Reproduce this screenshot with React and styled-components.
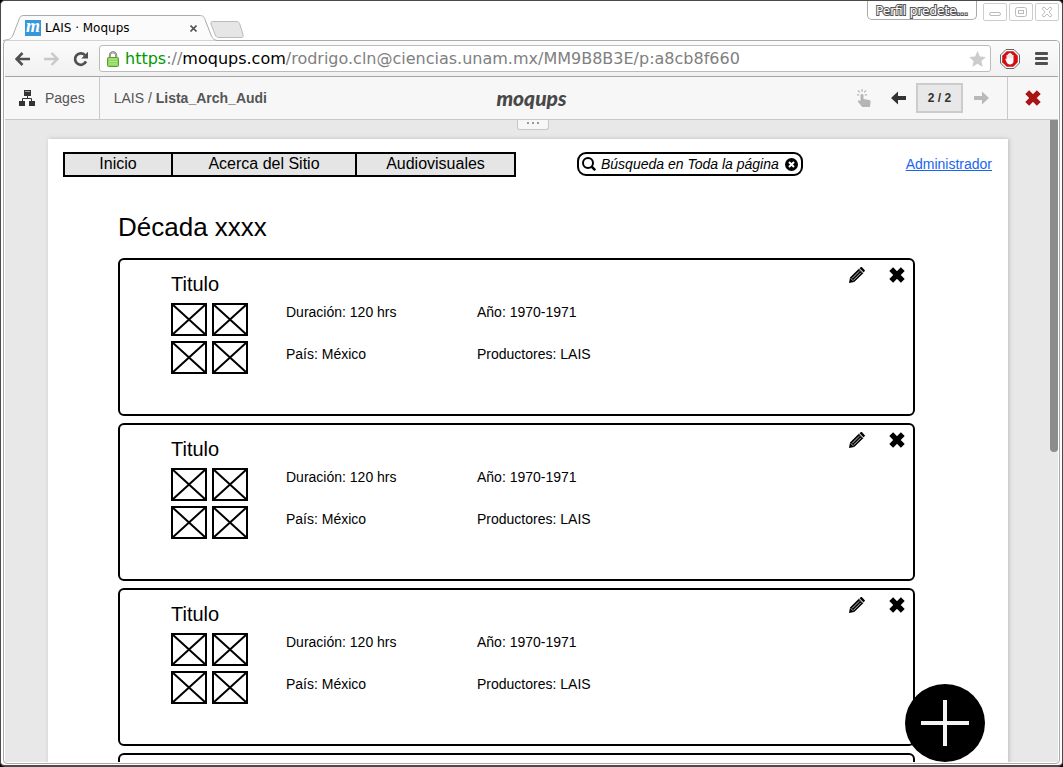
import React from 'react';
import styled, { createGlobalStyle } from 'styled-components';

const sans = '"Liberation Sans", Arial, sans-serif';
const system = '"DejaVu Sans", Verdana, sans-serif';

const Global = createGlobalStyle`
  *, *::before, *::after { box-sizing: border-box; }
  body { margin: 0; background: #000; font-family: ${sans}; color: #000; }
  button, input { font: inherit; color: inherit; margin: 0; }
  button { padding: 0; border: 0; background: none; cursor: pointer; }
  h1, h2, p, ul { margin: 0; padding: 0; font-weight: normal; }
  svg { display: block; flex: none; }
`;

/* ---------- browser window ---------- */

const Window = styled.div`
  display: flex;
  flex-direction: column;
  height: 100vh;
  padding: 0 2px 1px;
  background: #fff;
  border: 1px solid #4b4a4a;
  border-bottom-width: 2px;
  border-radius: 5px;
  overflow: hidden;
`;

const TitleBar = styled.header`
  display: flex;
  justify-content: space-between;
  height: 39px;
  flex: none;
`;

const TabStrip = styled.div`
  display: flex;
  align-items: flex-end;
`;

const Tab = styled.div`
  position: relative;
  z-index: 1;
  display: flex;
  align-items: center;
  width: 212px;
  height: 24px;
  padding: 0 18px 0 22px;
  font: 12px/16px ${system};
`;

const TabShape = styled.svg`
  position: absolute;
  left: 0;
  bottom: -1px;
  z-index: -1;
`;

const Favicon = styled.span`
  width: 16px;
  height: 16px;
  margin-right: 4px;
  background: #3498db;
  color: #fff;
  font: italic bold 18px/12px "Liberation Serif", serif;
  text-align: center;
`;

const TabTitle = styled.span`
  flex: 1;
  white-space: nowrap;
`;

const NewTab = styled.button`
  margin: 0 0 2px -5px;
`;

const WindowControls = styled.div`
  display: flex;
  align-items: flex-start;
  gap: 2px;
  padding-right: 1px;
`;

const Profile = styled.button`
  width: 110px;
  height: 19px;
  margin-right: 4px;
  border: 1px solid #aaa;
  border-top: 0;
  border-radius: 0 0 5px 5px;
  font: 12px/20px ${system};
  color: #fff;
  -webkit-text-stroke: 2px #555;
  paint-order: stroke fill;
`;

const WindowButton = styled.button`
  display: grid;
  place-items: center;
  width: 24px;
  height: 18px;
  margin-top: 2px;
  border: 1px solid #ccc;
  border-radius: 2px;
`;

const Frame = styled.div`
  display: flex;
  flex-direction: column;
  flex: 1;
  min-height: 0;
  padding: 0 1px 1px;
  border: 1px solid #aaa;
  border-radius: 4px;
  overflow: hidden;
`;

const BrowserBar = styled.div`
  display: flex;
  align-items: center;
  height: 36px;
  flex: none;
  padding: 0 10px 0 10px;
  background: linear-gradient(#fbfbfb, #f1f1f1);
  border-bottom: 1px solid #a5a5a5;
`;

const BrowserButton = styled.button`
  margin-right: ${(p) => p.$gap}px;
`;

const AddressBar = styled.div`
  display: flex;
  align-items: center;
  flex: 1;
  min-width: 0;
  height: 27px;
  padding: 0 4px 0 7px;
  margin-right: 9px;
  background: #fff;
  border: 1px solid #bbb;
  border-radius: 3px;
`;

const Address = styled.div`
  flex: 1;
  min-width: 0;
  padding-left: 6px;
  overflow: hidden;
  white-space: nowrap;
  font: 16px/22px ${system};
  color: #808080;
  outline: 0;
`;

const Secure = styled.span`
  color: #090;
`;

const Domain = styled.span`
  color: #000;
`;

/* ---------- application bar ---------- */

const AppBar = styled.div`
  display: grid;
  grid-template-columns: 1fr auto 1fr;
  height: 43px;
  flex: none;
  background: #f7f7f7;
  border-bottom: 1px solid #c8c8c8;
  color: #555;
  font-size: 14px;
`;

const BarSide = styled.div`
  display: flex;
  align-items: center;
  justify-content: ${(p) => (p.$end ? 'flex-end' : 'flex-start')};
  min-width: 0;
  white-space: nowrap;
`;

const PagesButton = styled.button`
  display: flex;
  align-items: center;
  gap: 10px;
  height: 100%;
  padding: 0 14px;
  border-right: 1px solid #c8c8c8;
`;

const Breadcrumb = styled.span`
  padding-left: 14px;
`;

const Logo = styled.span`
  align-self: center;
  color: #484848;
  font: italic 900 21px/24px Lato, sans-serif;
`;

const IconButton = styled.button`
  display: grid;
  place-items: center;
  width: 16px;
  height: 20px;
`;

const Tools = styled.div`
  display: flex;
  align-items: center;
  gap: 10px;
  padding-right: 18px;
`;

const Hotspots = styled(IconButton)`
  margin-right: 8px;
`;

const Counter = styled.span`
  width: 47px;
  height: 30px;
  border: 2px solid #ccc;
  background: #e8e8e8;
  color: #333;
  font: bold 12px/26px ${sans};
  text-align: center;
`;

const ClosePreview = styled.button`
  display: grid;
  place-items: center;
  width: 51px;
  height: 100%;
  border-left: 1px solid #c8c8c8;
`;

/* ---------- canvas ---------- */

const Canvas = styled.main`
  position: relative;
  display: flex;
  flex: 1;
  min-height: 0;
  background: #e8e8e8;
  overflow: hidden;
`;

const Handle = styled.button`
  position: absolute;
  top: -1px;
  left: 50%;
  width: 32px;
  height: 11px;
  margin-left: -15px;
  padding-bottom: 2px;
  background: #f7f7f7;
  border: 1px solid #c8c8c8;
  border-top: 0;
  border-radius: 0 0 3px 3px;
  display: grid;
  place-items: center;
`;

const Page = styled.div`
  flex: 1;
  min-width: 0;
  height: max-content;
  margin: 19px 42px 0 43px;
  padding: 13px 16px 0 15px;
  background: #fff;
  box-shadow: 1px 0 4px #bbb;
`;

const Scrollbar = styled.div`
  width: 8px;
  height: 332px;
  flex: none;
  background: #8c8c8c;
  border-radius: 0 0 4px 4px;
`;

const SiteHeader = styled.div`
  display: flex;
  align-items: flex-start;
  font-size: 14px;
`;

const Nav = styled.nav`
  display: flex;
  border: 2px solid #000;
  background: #e5e5e5;
`;

const NavLink = styled.a`
  min-width: ${(p) => p.$width}px;
  font-size: 16px;
  line-height: 20px;
  padding-bottom: 1px;
  text-align: center;
  color: #000;
  text-decoration: none;
  & + & { border-left: 2px solid #000; }
`;

const Search = styled.label`
  display: flex;
  align-items: center;
  width: 226px;
  height: 24px;
  margin-left: 61px;
  padding: 0 3px;
  border: 2px solid #000;
  border-radius: 9px;
`;

const SearchInput = styled.input`
  flex: 1;
  min-width: 0;
  height: 20px;
  padding: 0 0 0 5px;
  border: 0;
  outline: 0;
  background: none;
  font-style: italic;
  font-size: 14px;
`;

const AdminLink = styled.a`
  margin-left: auto;
  line-height: 24px;
  color: #1a66ee;
`;

const Content = styled.section`
  padding: 35px 77px 0 55px;
`;

const Heading = styled.h1`
  font-size: 26px;
  line-height: 30px;
  margin-bottom: 16px;
`;

const CardList = styled.div`
  display: flex;
  flex-direction: column;
  gap: 7px;
`;

const Card = styled.article`
  display: flex;
  justify-content: space-between;
  height: 158px;
  padding: 7px 8px 0 51px;
  border: 2px solid #000;
  border-radius: 6px;
`;

const CardTitle = styled.h2`
  margin: 5px 0 7px;
  font-size: 20px;
  line-height: 24px;
`;

const CardBody = styled.div`
  display: flex;
  gap: 38px;
`;

const Thumbs = styled.div`
  display: grid;
  grid-template-columns: 36px 36px;
  gap: 5px;
`;

const Facts = styled.div`
  display: grid;
  grid-template-columns: 191px auto;
  align-content: start;
  row-gap: 24px;
  font-size: 14px;
  line-height: 18px;
`;

const CardActions = styled.div`
  display: flex;
  align-items: flex-start;
  gap: 24px;
`;

const AddButton = styled.button`
  position: absolute;
  right: 73px;
  bottom: 0;
`;

/* ---------- icons ---------- */

const BackArrow = ({ color }) => (
  <svg width="16" height="16" viewBox="0 0 16 16" fill="none" stroke={color} strokeWidth="2.6">
    <path d="M7.500 2 1.500 8l6 6M1.500 8H15" />
  </svg>
);

const ForwardArrow = ({ color }) => (
  <svg width="16" height="16" viewBox="0 0 16 16" fill="none" stroke={color} strokeWidth="2.4">
    <path d="M7.500 2l6 6-6 6M13.500 8H0" />
  </svg>
);

const Reload = () => (
  <svg width="16" height="16" viewBox="0 0 16 16">
    <path d="M12 4.200A5.700 5.700 0 1 0 13 10.400" fill="none" stroke="#505050" strokeWidth="2.7" />
    <path d="M15 .8v6.700H8.300z" fill="#505050" />
  </svg>
);

const Lock = () => (
  <svg width="12" height="16" viewBox="0 0 12 16">
    <path d="M2.8 8V4.500a3.200 3.200 0 0 1 6.400 0V8" fill="none" stroke="#777" strokeWidth="2" />
    <path d="M2.8 8V4.500a3.200 3.200 0 0 1 6.400 0V8" fill="none" stroke="#ccc" strokeWidth=".7" />
    <rect x=".5" y="6.500" width="11" height="9" rx="1" fill="#8fd65c" stroke="#5b9b39" />
    <path d="M2 8h8M2 10.500h8M2 13h8" stroke="#b3ea87" />
  </svg>
);

const Star = () => (
  <svg width="17" height="16" viewBox="0 0 17 16">
    <path d="M8.500 0l2.400 5.500 6 .500-4.500 4 1.300 6-5.200-3.200L3.300 16l1.300-6L.1 6l6-.500z" fill="#ccc" />
  </svg>
);

const BlockIcon = () => (
  <svg width="20" height="20" viewBox="0 0 20 20">
    <path d="M6 .5h8L19.500 6v8L14 19.500H6L.5 14V6z" fill="#fff" stroke="#666" />
    <path d="M6.700 2.200h6.600l4.500 4.500v6.600l-4.500 4.500H6.700l-4.500-4.500V6.700z" fill="#d40d12" />
    <path d="M5 9.500l1.500.8V6h1.300V4.800h1.400V4h1.600v.8h1.400V6h1.300v6c0 2-1.500 3.500-3.500 3.500-1.800 0-3-1.200-3.700-3z" fill="#fff" />
    <path d="M8 6v3M10 5.500V9M12 6v3" stroke="#e88" strokeWidth=".5" />
  </svg>
);

const Menu = () => (
  <svg width="13" height="13" viewBox="0 0 13 13" fill="#505050">
    <rect width="13" height="3" rx="1" />
    <rect y="5" width="13" height="3" rx="1" />
    <rect y="10" width="13" height="3" rx="1" />
  </svg>
);

const Sitemap = () => (
  <svg width="16" height="16" viewBox="0 0 16 16" fill="#333">
    <path d="M5 0h7v6H5zM0 11h6v5H0zM10 11h6v5h-6z" />
    <path d="M8.500 5v3.500M3.500 11V8.500h9V11" fill="none" stroke="#333" />
    <path d="M6 1.500h5" stroke="#999" />
  </svg>
);

const Tap = () => (
  <svg width="14" height="18" viewBox="0 0 14 18">
    <path d="M5 5c1 0 1.500.6 1.500 1.500V10l5.500 1c1.300.3 1.700 1 1.600 2.300L13 18H5.200L1 12.700c-.5-1 .5-2 1.500-1.300l1 .800V6.500C3.500 5.600 4 5 5 5z" fill="#b5b5b5" />
    <path d="M5 0v3M1 1.300l1.800 2M9 1.300l-1.800 2M0 5.800h2.300M7.700 5.800H10" stroke="#b5b5b5" strokeWidth="1.200" />
  </svg>
);

const SolidArrow = ({ color, right }) => (
  <svg width="15" height="14" viewBox="0 0 15 14">
    <path d={right ? 'M15 7L8 .500V5H0v4h8v4.500z' : 'M0 7l7-6.500V5h8v4H7v4.500z'} fill={color} />
  </svg>
);

const Cross = ({ color = '#000' }) => (
  <svg width="16" height="16" viewBox="0 0 16 16">
    <path d="M2.200 2.200l11.600 11.600M13.800 2.200L2.200 13.800" stroke={color} strokeWidth="5.400" />
  </svg>
);

const Pencil = () => (
  <svg width="16" height="16" viewBox="0 0 16 16">
    <path d="M0 16l1-5.500L10 1.500l4.500 4.500L5.200 15zM10.600 1.200L11.600.300c.5-.4.9-.4 1.400 0l2.600 2.600c.5.500.5.900 0 1.400l-1 1z" />
    <path d="M3.200 11.300l7-7M4.800 12.900l7-7" stroke="#fff" strokeWidth=".8" />
    <path d="M1.700 11.300l3 3" stroke="#fff" strokeWidth=".7" />
    <path d="M10 2.300l3.800 3.800" stroke="#fff" strokeWidth=".6" />
  </svg>
);

const Magnifier = () => (
  <svg width="14" height="14" viewBox="0 0 14 14" fill="none" stroke="#000" strokeWidth="2">
    <circle cx="6" cy="6" r="5" />
    <path d="M9.600 9.600l3.600 3.600" strokeWidth="2.500" />
  </svg>
);

const ClearIcon = () => (
  <svg width="13" height="13" viewBox="0 0 13 13">
    <circle cx="6.500" cy="6.500" r="6.500" />
    <path d="M4 4l5 5M9 4L4 9" stroke="#fff" strokeWidth="2" />
  </svg>
);

const Placeholder = () => (
  <svg width="36" height="33" viewBox="0 0 36 33" fill="none" stroke="#000">
    <rect x="1" y="1" width="34" height="31" strokeWidth="2" />
    <path d="M1 1l34 31M35 1L1 32" strokeWidth="2" />
  </svg>
);

const outline = { width: 14, height: 12, viewBox: '0 0 14 12', fill: 'none', stroke: '#bbb' };

const facts = ['Duración: 120 hrs', 'Año: 1970-1971', 'País: México', 'Productores: LAIS'];

const Entry = () => (
  <Card>
    <div>
      <CardTitle>Titulo</CardTitle>
      <CardBody>
        <Thumbs>
          {[0, 1, 2, 3].map((n) => <Placeholder key={n} />)}
        </Thumbs>
        <Facts>
          {facts.map((fact) => <p key={fact}>{fact}</p>)}
        </Facts>
      </CardBody>
    </div>
    <CardActions>
      <button aria-label="Editar"><Pencil /></button>
      <button aria-label="Eliminar"><Cross /></button>
    </CardActions>
  </Card>
);

export default function App() {
  return (
    <>
      <Global />
      <Window>
        <TitleBar>
          <TabStrip>
            <Tab>
              <TabShape width="214" height="26" viewBox="0 0 214 26">
                <path d="M0 25.500C6 24.500 8 24.500 10 20L16 4.500C17 1.500 18 .500 21 .500H196C200 .500 201 1.500 202 4.500L208 20C210 24.500 211 24.500 214 25.500" fill="#fbfbfb" stroke="#aaa" />
              </TabShape>
              <Favicon>m</Favicon>
              <TabTitle>LAIS · Moqups</TabTitle>
              <button aria-label="Close tab">
                <svg width="7" height="7" viewBox="0 0 7 7" stroke="#555" strokeWidth="1.600">
                  <path d="M.5.500l6 6M6.500.500l-6 6" />
                </svg>
              </button>
            </Tab>
            <NewTab aria-label="New tab">
              <svg width="34" height="17" viewBox="0 0 34 17">
                <path d="M3 .500h23c2 0 3 .500 3.600 2l3.400 11c.500 2 0 3-2 3H9c-2 0-3-.500-3.700-2.500L1 3C.500 1.500 1 .500 3 .500z" fill="#e6e6e6" stroke="#bbb" />
              </svg>
            </NewTab>
          </TabStrip>
          <WindowControls>
            <Profile>Perfil predete...</Profile>
            <WindowButton aria-label="Minimize">
              <svg {...outline}><rect x="1.500" y="6.500" width="11" height="3" rx="1.500" /></svg>
            </WindowButton>
            <WindowButton aria-label="Maximize">
              <svg {...outline}>
                <rect x="1.500" y="1.500" width="11" height="9" rx="2" />
                <rect x="4.500" y="4.500" width="5" height="3" />
              </svg>
            </WindowButton>
            <WindowButton aria-label="Close">
              <svg {...outline}>
                <path d="M2 2.500L4 1l3 3 3-3 2 1.500L9 6l3 3.500-2 1.500-3-3-3 3-2-1.500L5 6z" />
              </svg>
            </WindowButton>
          </WindowControls>
        </TitleBar>

        <Frame>
          <BrowserBar>
            <BrowserButton aria-label="Back" $gap={13}><BackArrow color="#505050" /></BrowserButton>
            <BrowserButton aria-label="Forward" $gap={13}><ForwardArrow color="#c8c8c8" /></BrowserButton>
            <BrowserButton aria-label="Reload" $gap={10}><Reload /></BrowserButton>
            <AddressBar>
              <Lock />
              <Address role="textbox" aria-label="Address" contentEditable suppressContentEditableWarning spellCheck={false}>
                <Secure>https</Secure>://<Domain>moqups.com</Domain>/rodrigo.cln@ciencias.unam.mx/MM9B8B3E/p:a8cb8f660
              </Address>
              <button aria-label="Bookmark"><Star /></button>
            </AddressBar>
            <BrowserButton aria-label="Blocker" $gap={15}><BlockIcon /></BrowserButton>
            <BrowserButton aria-label="Menu" $gap={0}><Menu /></BrowserButton>
          </BrowserBar>

          <AppBar>
            <BarSide>
              <PagesButton><Sitemap />Pages</PagesButton>
              <Breadcrumb>LAIS / <b>Lista_Arch_Audi</b></Breadcrumb>
            </BarSide>
            <Logo>moqups</Logo>
            <BarSide $end>
              <Tools>
                <Hotspots aria-label="Hotspots"><Tap /></Hotspots>
                <IconButton aria-label="Previous page"><SolidArrow color="#333" /></IconButton>
                <Counter>2 / 2</Counter>
                <IconButton aria-label="Next page"><SolidArrow color="#b9b9b9" right /></IconButton>
              </Tools>
              <ClosePreview aria-label="Close preview"><Cross color="#a91414" /></ClosePreview>
            </BarSide>
          </AppBar>

          <Canvas>
            <Page>
              <SiteHeader>
                <Nav>
                  <NavLink href="#inicio" $width={106}>Inicio</NavLink>
                  <NavLink href="#acerca" $width={184}>Acerca del Sitio</NavLink>
                  <NavLink href="#audiovisuales" $width={159}>Audiovisuales</NavLink>
                </Nav>
                <Search>
                  <Magnifier />
                  <SearchInput aria-label="Búsqueda" defaultValue="Búsqueda en Toda la página" />
                  <button aria-label="Borrar"><ClearIcon /></button>
                </Search>
                <AdminLink href="#admin">Administrador</AdminLink>
              </SiteHeader>
              <Content>
                <Heading>Década xxxx</Heading>
                <CardList>
                  {[0, 1, 2].map((n) => <Entry key={n} />)}
                  <Card aria-busy="true" />
                </CardList>
              </Content>
            </Page>
            <Scrollbar />
            <Handle aria-label="Toggle toolbar">
              <svg width="12" height="2" viewBox="0 0 12 2" fill="#999">
                <path d="M0 0h2v2H0zM5 0h2v2H5zM10 0h2v2h-2z" />
              </svg>
            </Handle>
            <AddButton aria-label="Agregar">
              <svg width="80" height="78" viewBox="0 0 80 78">
                <ellipse cx="40" cy="39" rx="40" ry="39" />
                <path d="M40 16v46M16 39h48" stroke="#f4f4f4" strokeWidth="4" />
              </svg>
            </AddButton>
          </Canvas>
        </Frame>
      </Window>
    </>
  );
}
